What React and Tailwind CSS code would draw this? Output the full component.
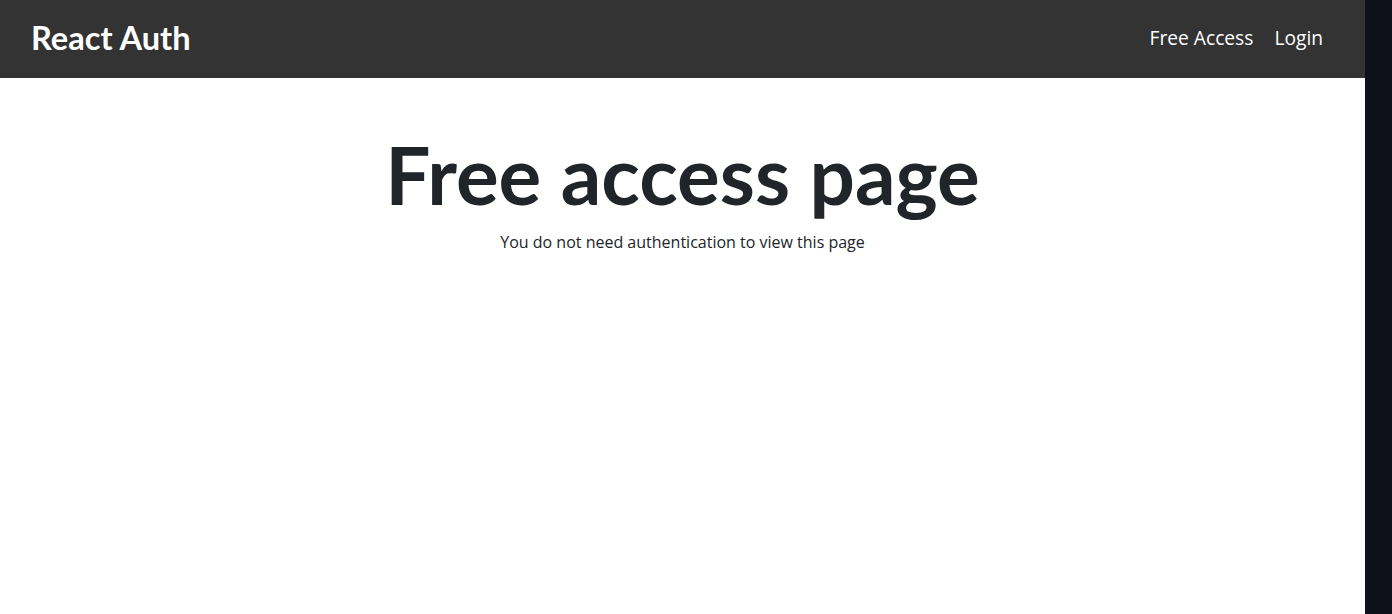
export default function App() {
  return (
    <div className="flex h-[614px] w-full overflow-hidden bg-[#0f111a]">
      <div className="flex-1 flex flex-col bg-white">
        <header className="h-[78px] bg-[#333333] flex items-center justify-between pl-[31px] pr-[42px] pb-[2px]">
          <a
            href="#"
            className="text-white text-[32.6px] font-bold leading-none font-['Lato','Liberation_Sans',sans-serif]"
          >
            React Auth
          </a>
          <nav className="flex items-center gap-[21px] text-white text-[19.2px] font-['Open_Sans','Liberation_Sans',sans-serif]">
            <a href="#">Free Access</a>
            <a href="#">Login</a>
          </nav>
        </header>
        <main className="flex flex-col items-center pt-[48px] text-[#212529]">
          <h1 className="text-[80px] font-bold leading-[1.2] font-['Lato','Liberation_Sans',sans-serif]">
            Free access page
          </h1>
          <p className="text-[16px] leading-6 mt-[8px] font-['Open_Sans','Liberation_Sans',sans-serif]">
            You do not need authentication to view this page
          </p>
        </main>
      </div>
      <div className="w-[27px] shrink-0 bg-[#0f111a]" />
    </div>
  );
}
